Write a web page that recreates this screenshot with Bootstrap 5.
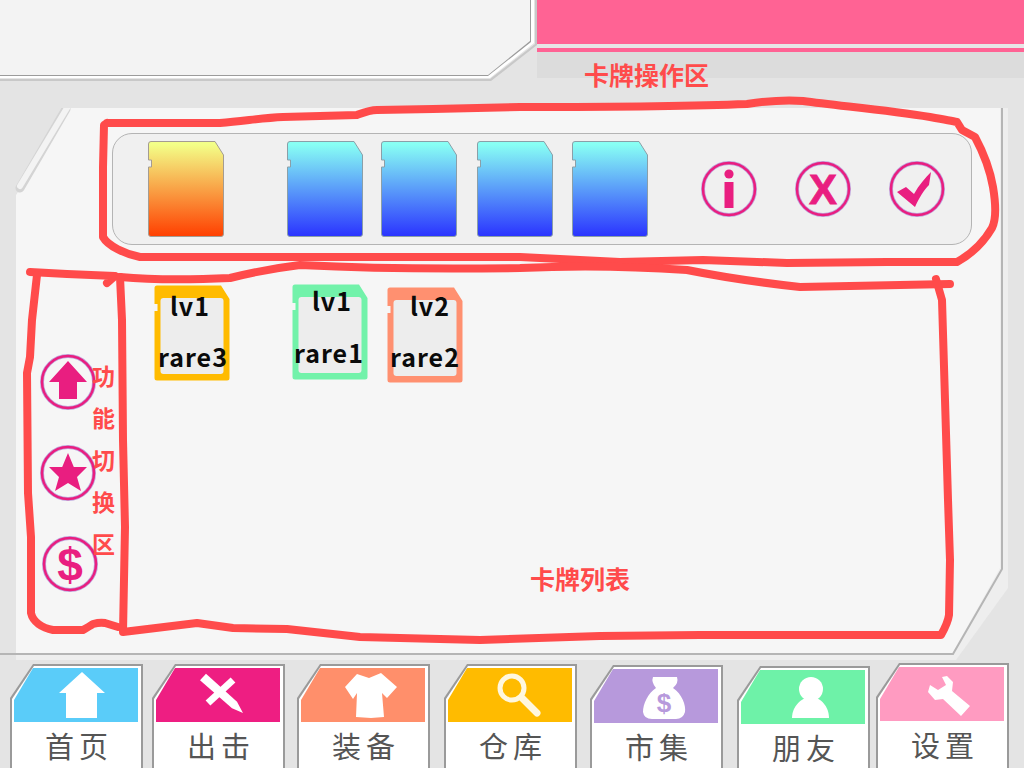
<!DOCTYPE html>
<html lang="zh">
<head>
<meta charset="utf-8">
<title>卡牌</title>
<link href="https://cdn.jsdelivr.net/npm/bootstrap@5.3.0/dist/css/bootstrap.min.css" rel="stylesheet">
<style>
html,body{margin:0;height:100%;overflow:hidden;background:#e4e4e4;font-family:"Noto Sans CJK SC","Noto Sans",sans-serif}
.stage{position:relative;width:1024px;height:768px;overflow:hidden;background:#e4e4e4}
.top-strip{height:78px}
.top-left{width:537px;height:82px;flex:none}
.top-right{flex:1;background:#dcdcdc;height:78px}
.pink-bar{height:44px;background:#ff6394}
.pale-line{height:4px;background:#e6e6e6}
.pink-line{height:4px;background:#ff6394}
.main-panel{position:relative;width:1008px;height:552px;margin-top:30px}
.panel-art{position:absolute;left:0;top:0}
.panel-body{position:relative;padding-left:112px;padding-top:25px}
.tray{width:860px;height:112px;border:1px solid #b4b4b4;border-radius:20px;background:#f0f0f0;padding-left:35px}
.sd-big{width:76px;height:96px;flex:none;display:block}
.gap-a{margin-left:63px}.gap-b{margin-left:18px}.gap-c{margin-left:20px}.gap-c2{margin-left:19px}
.gap-d{margin-left:53px}.gap-e{margin-left:38px}.gap-f{margin-left:38px}
.round-ico{width:56px;height:56px;flex:none;display:block}
.lower{margin-left:-72px}
.side-col{width:58px;padding-top:109px;gap:35px}
.side-last{margin-left:2px}
.list-area{margin-left:56px}
.mini{position:relative;width:76px;height:96px;flex:none}
.mini svg{position:absolute;left:0;top:0}
.mini-a{margin-top:40px}
.mini-b{margin-top:39px;margin-left:62px}
.mini-c{margin-top:42px;margin-left:19px}
.mini-text{position:relative;height:96px;font-weight:700;font-size:25px;line-height:30px;color:#0a0a0a;text-align:center;white-space:nowrap;letter-spacing:1px}
.mini-a .mini-lv{transform:translate(-2px,5px)}
.mini-a .mini-rare{transform:translate(1px,0)}
.mini-b .mini-lv{transform:translate(2px,1px)}
.mini-b .mini-rare{transform:translate(-1px,-3px)}
.mini-c .mini-lv{transform:translate(5px,3px)}
.mini-c .mini-rare{transform:translate(0,-2px)}
.mini-rare{margin-top:26px}
.tile-row{padding-left:10px;margin-top:4px}
.tile{width:133px;height:110px;flex:none;background:#9a9a9a;clip-path:polygon(23px 0,133px 0,133px 110px,0 110px,0 34px);padding:2px 2px 0 2px}
.tile-in{height:108px;background:#fff;clip-path:polygon(22px 0,129px 0,129px 108px,0 108px,0 33px);padding:2px 3px 0 2px;display:flex;flex-direction:column}
.tile-head{height:54px;flex:none;display:block}
.tile-label{font-size:29px;line-height:36px;letter-spacing:5px;color:#555;text-align:center;padding-top:5px;padding-left:6px;white-space:nowrap}
.t2{margin-left:9px}.t3{margin-left:12px}.t4{margin-left:14px}
.t5{margin-left:13px;margin-top:1px}.t6{margin-left:14px;margin-top:2px}.t7{margin-left:6px;margin-top:-1px}
.ink{position:absolute;left:0;top:0;pointer-events:none}
.note{position:absolute;color:#ff4b4b;font-weight:700;font-size:25px;line-height:30px;white-space:nowrap}
.note-top{left:584px;top:59px}
.note-list{left:530px;top:563px}
.note-side{left:92px;top:354px;width:24px;line-height:42px;font-size:23px}
</style>
</head>
<body>
<div class="stage">
  <svg width="0" height="0" class="d-block">
    <defs>
      <linearGradient id="gWarm" x1="0" y1="0" x2="0" y2="1"><stop offset="0.03" stop-color="#f3ff88"/><stop offset="1" stop-color="#ff3f00"/></linearGradient>
      <linearGradient id="gCold" x1="0" y1="0" x2="0" y2="1"><stop offset="0.03" stop-color="#88fff4"/><stop offset="1" stop-color="#2a33ff"/></linearGradient>
      <path id="sdShape" d="M.5 3Q.5.5 3 .5H67L75.5 14V93Q75.5 95.5 73 95.5H3Q.5 95.5 .5 93V26H3.5V19H.5Z"/>
      <g id="ring" fill="none"><circle cx="28" cy="28" r="26" stroke="#bfa6dc" stroke-width="4"/><circle cx="28" cy="28" r="26" stroke="#e91e80" stroke-width="2.500"/></g>
      <polygon id="headShape" points="19,0 124,0 124,54 0,54 0,32"/>
    </defs>
  </svg>

  <div class="top-strip d-flex">
    <svg class="top-left" viewBox="0 0 537 82">
      <polygon points="0,0 537,0 537,44 491,80 0,80" fill="#e4e4e4"/>
      <polygon points="0,79 490,79 535,44 535,0 537,0 537,45 491,81 0,81" fill="#c8c8c8"/>
      <polygon points="0,78 490,78 534,43 534,0 0,0" fill="#fff"/>
      <polygon points="0,76 488,76 531,42 531,0 0,0" fill="#9b9b9b"/>
      <polygon points="0,75 488,75 530,41 530,0 0,0" fill="#f3f3f3"/>
    </svg>
    <div class="top-right">
      <div class="pink-bar"></div>
      <div class="pale-line"></div>
      <div class="pink-line"></div>
    </div>
  </div>

  <div class="main-panel">
    <svg class="panel-art" width="1008" height="552" viewBox="0 0 1008 552">
      <polygon points="70,0 1008,0 1008,480 956,552 16,552 16,87" fill="#eeeeee"/>
      <polygon points="70,0 1000,0 1000,460 952,546 16,546 16,87" fill="#f6f6f6"/>
      <polyline points="1002,0 1002,461 953,546 0,546" fill="none" stroke="#b5b5b5" stroke-width="2"/>
      <polygon points="0,0 70,0 16,87 0,87" fill="#e4e4e4"/>
      <polyline points="66,1 20,80" fill="none" stroke="#d4d4d4" stroke-width="9" stroke-linecap="round"/>
      <polyline points="67,0 20,78" fill="none" stroke="#f3f3f3" stroke-width="6" stroke-linecap="round"/>
    </svg>
    <div class="panel-body">
      <div class="tray d-flex align-items-center">
        <svg class="sd-big" viewBox="0 0 76 96"><use href="#sdShape" fill="url(#gWarm)" stroke="#a49c92"/></svg>
        <svg class="sd-big gap-a" viewBox="0 0 76 96"><use href="#sdShape" fill="url(#gCold)" stroke="#8b9fa8"/></svg>
        <svg class="sd-big gap-b" viewBox="0 0 76 96"><use href="#sdShape" fill="url(#gCold)" stroke="#8b9fa8"/></svg>
        <svg class="sd-big gap-c" viewBox="0 0 76 96"><use href="#sdShape" fill="url(#gCold)" stroke="#8b9fa8"/></svg>
        <svg class="sd-big gap-c2" viewBox="0 0 76 96"><use href="#sdShape" fill="url(#gCold)" stroke="#8b9fa8"/></svg>
        <svg class="round-ico gap-d" viewBox="0 0 56 56">
          <use href="#ring"/>
          <circle cx="28" cy="13" r="4.600" fill="#e91e80"/><rect x="23.500" y="21" width="9" height="26" fill="#e91e80"/>
        </svg>
        <svg class="round-ico gap-e" viewBox="0 0 56 56">
          <use href="#ring"/>
          <text x="28" y="43" text-anchor="middle" font-family="Liberation Sans" font-weight="700" font-size="42" fill="#e91e80" stroke="#e91e80" stroke-width=".8">X</text>
        </svg>
        <svg class="round-ico gap-f" viewBox="0 0 56 56">
          <use href="#ring"/>
          <path d="M8 31L17 26 25 33C30 24 36 17 42 11L40 24C35 29 30 37 26 46Z" fill="#e91e80"/>
        </svg>
      </div>
      <div class="lower d-flex">
        <div class="side-col d-flex flex-column">
          <svg class="round-ico" viewBox="0 0 56 56">
            <use href="#ring"/>
            <path d="M28 7L47 28H37V45H19V28H9Z" fill="#e91e80"/>
          </svg>
          <svg class="round-ico" viewBox="0 0 56 56">
            <use href="#ring"/>
            <path d="M28 8L33.800 22 47 22 37 32 41 46 28 38 15 46 19 32 9 22 22.200 22Z" fill="#e91e80"/>
          </svg>
          <svg class="round-ico side-last" viewBox="0 0 56 56">
            <use href="#ring"/>
            <text x="28" y="45" text-anchor="middle" font-family="Liberation Sans" font-weight="700" font-size="46" fill="#e91e80">$</text>
          </svg>
        </div>
        <div class="list-area d-flex align-items-start">
          <div class="mini mini-a">
            <svg width="76" height="96" viewBox="0 0 76 96"><use href="#sdShape" fill="#ffbb00"/><rect x="6.500" y="13" width="63" height="76" rx="3" fill="#ededed"/></svg>
            <div class="mini-text"><div class="mini-lv">lv1</div><div class="mini-rare">rare3</div></div>
          </div>
          <div class="mini mini-b">
            <svg width="76" height="96" viewBox="0 0 76 96"><use href="#sdShape" fill="#72f2aa"/><rect x="6.500" y="13" width="63" height="76" rx="3" fill="#ededed"/></svg>
            <div class="mini-text"><div class="mini-lv">lv1</div><div class="mini-rare">rare1</div></div>
          </div>
          <div class="mini mini-c">
            <svg width="76" height="96" viewBox="0 0 76 96"><use href="#sdShape" fill="#ff9070"/><rect x="6.500" y="13" width="63" height="76" rx="3" fill="#ededed"/></svg>
            <div class="mini-text"><div class="mini-lv">lv2</div><div class="mini-rare">rare2</div></div>
          </div>
        </div>
      </div>
    </div>
  </div>

  <div class="tile-row d-flex align-items-start">
    <div class="tile"><div class="tile-in">
      <svg class="tile-head" viewBox="0 0 124 54" width="124" height="54"><use href="#headShape" fill="#5accf9"/><polygon points="68,4 91,25 83,25 83,50 52,50 52,25 45,25" fill="#fff"/></svg>
      <div class="tile-label">首页</div>
    </div></div>
    <div class="tile t2"><div class="tile-in">
      <svg class="tile-head" viewBox="0 0 124 54" width="124" height="54"><use href="#headShape" fill="#ee1e82"/><polygon points="50,5.700 81,33.700 87,45 76,40.300 44,12.300" fill="#fff"/><path d="M77 12L52 35" stroke="#fff" stroke-width="7"/></svg>
      <div class="tile-label">出击</div>
    </div></div>
    <div class="tile t3"><div class="tile-in">
      <svg class="tile-head" viewBox="0 0 124 54" width="124" height="54"><use href="#headShape" fill="#ff8f6b"/><polygon points="56,6 68,10 80,5 96,19 86,30 81,25 83,49 70,50 55,49 56,25 52,31 44,19" fill="#fff"/></svg>
      <div class="tile-label">装备</div>
    </div></div>
    <div class="tile t4"><div class="tile-in">
      <svg class="tile-head" viewBox="0 0 124 54" width="124" height="54"><use href="#headShape" fill="#ffbb00"/><circle cx="64" cy="20" r="12" fill="none" stroke="#fff7df" stroke-width="5"/><path d="M74 30L89 45" stroke="#fff7df" stroke-width="7" stroke-linecap="round"/></svg>
      <div class="tile-label">仓库</div>
    </div></div>
    <div class="tile t5"><div class="tile-in">
      <svg class="tile-head" viewBox="0 0 124 54" width="124" height="54"><use href="#headShape" fill="#b799dc"/><path d="M59 8H83Q85 14 79 19C88 25 92 36 91 43Q89 50 82 50H58Q50 50 49 43C49 35 54 24 62 19Q57 13 59 8Z" fill="#fff"/><text x="70" y="43" text-anchor="middle" font-family="Liberation Sans" font-weight="700" font-size="26" fill="#b799dc">$</text></svg>
      <div class="tile-label">市集</div>
    </div></div>
    <div class="tile t6"><div class="tile-in">
      <svg class="tile-head" viewBox="0 0 124 54" width="124" height="54"><use href="#headShape" fill="#6ef2a8"/><circle cx="70" cy="19" r="12" fill="#fff"/><path d="M51 48C51 37 60 27 70 27S88 37 88 48Z" fill="#fff"/></svg>
      <div class="tile-label">朋友</div>
    </div></div>
    <div class="tile t7"><div class="tile-in">
      <svg class="tile-head" viewBox="0 0 124 54" width="124" height="54"><use href="#headShape" fill="#ff9bc1"/><path d="M62 10L66 18 58 23 50 18 48 25 55 33 63 32 81 49 90 39 72 24 73 15 67 9Z" fill="#fff"/></svg>
      <div class="tile-label">设置</div>
    </div></div>
  </div>

  <svg class="ink" width="1024" height="768" viewBox="0 0 1024 768" fill="none" stroke="#ff4b4b" stroke-width="8" stroke-linecap="round" stroke-linejoin="round">
    <path d="M107 123L220 123C245 121 262 118 283 117L357 115C365 112 370 110 377 110L433 109 520 107C600 107 700 106 747 104Q780 99 803 101C840 106 887 110 930 117Q952 121 957 122L962 130 975 137C982 150 990 170 993 187 996 205 996 220 992 228 985 240 975 252 957 262L887 262 787 263 703 260 620 262 520 257 443 257 320 257 140 257C125 254 108 246 103 237L103 167 104 125 107 123"/>
    <path d="M30 272L67 274 115 276 107 283"/>
    <path d="M37 275L32 320 30 357 27 373 28 493 31 537 31 613C33 622 42 628 53 630L83 630Q90 626 93 624 100 622 105 623L118 627"/>
    <path d="M120 277Q165 281 230 278C250 273 275 268 300 265Q400 270 520 268 600 264 687 270 737 280 800 287L950 284"/>
    <path d="M120 277L122 320 123 440 125 527 123 632 197 623 233 628 287 629 360 637 480 640 600 636 700 635 941 635C945 628 948 622 949 615L950 560 948 500 945 400 942 300 936 279"/>
  </svg>
  <div class="note note-top">卡牌操作区</div>
  <div class="note note-list">卡牌列表</div>
  <div class="note note-side d-flex flex-column"><span>功</span><span>能</span><span>切</span><span>换</span><span>区</span></div>
</div>
<script src="https://cdn.jsdelivr.net/npm/bootstrap@5.3.0/dist/js/bootstrap.bundle.min.js"></script>
</body>
</html>
